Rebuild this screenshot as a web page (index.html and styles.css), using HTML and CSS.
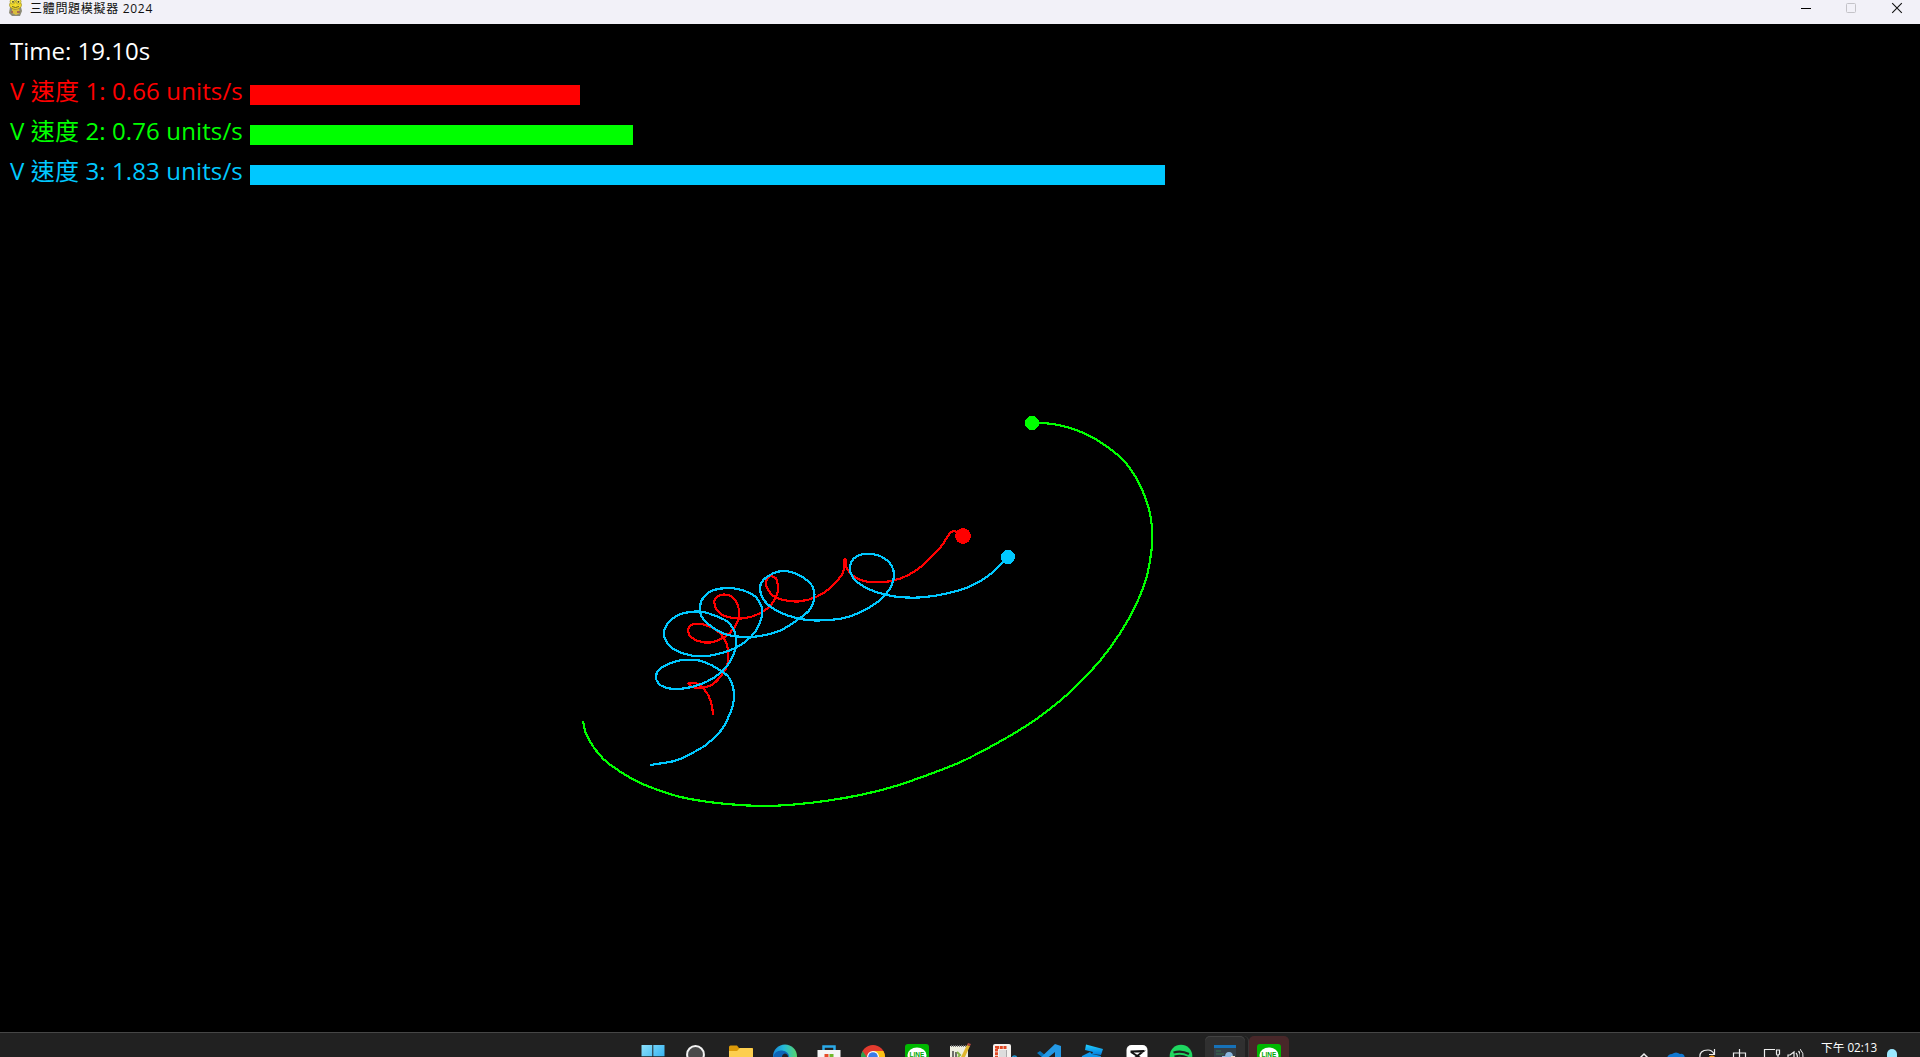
FILE: index.html
```html
<!DOCTYPE html>
<html lang="zh-Hant">
<head>
<meta charset="utf-8">
<title>三體問題模擬器 2024</title>
<link rel="stylesheet" href="styles.css">
</head>
<body>
<header class="titlebar">
  <svg class="app-icon" viewBox="0 0 16 18" width="16" height="18">
    <path d="M2 8h11l1 4-2 5H4l-3-3z" fill="#8c8a78"/>
    <path d="M4 9l3 2 4-2 1 5-4 2-4-2z" fill="#d9bd3c"/>
    <path d="M3 12h2v2H3zM9 12h3v2H9z" fill="#a46c52"/>
    <ellipse cx="7.5" cy="6" rx="6" ry="4.2" fill="#f2dc2c" stroke="#9b8a20" stroke-width=".7"/>
    <circle cx="4.5" cy="2.6" r="2.5" fill="#f7e850" stroke="#9b8a20" stroke-width=".6"/>
    <circle cx="10.6" cy="2.6" r="2.5" fill="#f7e850" stroke="#9b8a20" stroke-width=".6"/>
    <circle cx="5" cy="2.8" r=".9" fill="#333"/><circle cx="10.4" cy="2.8" r=".9" fill="#333"/>
    <path d="M4 7.5q3.500 2 7 0" fill="none" stroke="#71651c"/>
  </svg>
  <span class="title">三體問題模擬器 2024</span>
  <div class="window-buttons">
    <svg width="46" height="24" viewBox="0 0 46 24"><path d="M19 8.500h10" stroke="#000"/></svg>
    <svg width="46" height="24" viewBox="0 0 46 24"><rect x="18.500" y="3.500" width="9" height="9" rx="1" fill="none" stroke="#c4c3c8"/></svg>
    <svg width="46" height="24" viewBox="0 0 46 24"><path d="M18.200 3.200l9.600 9.600m0-9.600l-9.600 9.600" stroke="#111" stroke-width="1.100"/></svg>
  </div>
</header>

<main class="stage">
  <svg class="space" viewBox="0 24 1920 1008" width="1920" height="1008">
    <g class="red"><path class="trail" id="trail1"/><circle cx="963" cy="536" r="7.900"/></g>
    <g class="green"><path class="trail" id="trail2"/><circle cx="1032" cy="423" r="7"/></g>
    <g class="blue"><path class="trail" id="trail3"/><circle cx="1008" cy="557" r="7"/></g>
  </svg>
  <section class="hud">
    <div class="row time"><span class="label">Time: 19.10s</span></div>
    <div class="row red"><span class="label">V 速度 1: 0.66 units/s</span><span class="bar" style="width:330px"></span></div>
    <div class="row green"><span class="label">V 速度 2: 0.76 units/s</span><span class="bar" style="width:383px"></span></div>
    <div class="row blue"><span class="label">V 速度 3: 1.83 units/s</span><span class="bar" style="width:915px"></span></div>
  </section>
</main>

<footer class="taskbar">
  <nav class="apps">
    <span class="app"><svg viewBox="0 0 24 24"><defs><linearGradient id="win" x2="1" y2="1"><stop stop-color="#8be0fb"/><stop offset="1" stop-color="#1ba5ee"/></linearGradient></defs><path d="M.5 0H11.3v11.3H.5zM12.3 0h11.2v11.3H12.3zM.5 12.3h10.8v11H.5zM12.3 12.3h11.2v11H12.3z" fill="url(#win)"/></svg></span>
    <span class="app"><svg viewBox="0 0 24 24"><circle cx="10.5" cy="9.5" r="8.4" fill="#4a4a4a" stroke="#f2f2f2" stroke-width="2"/><path d="M16.5 16l5 6" stroke="#eee" stroke-width="2.5"/></svg></span>
    <span class="app"><svg viewBox="0 0 24 24"><path d="M0 2q0-1.500 1.500-1.500H8L10 3h14v9H0z" fill="#dc9a08"/><path d="M0 6h8l3-3h11.500q1.500 0 1.500 1.500V22H0z" fill="#fdcf4f"/></svg></span>
    <span class="app"><svg viewBox="0 0 24 24"><defs><linearGradient id="edge"><stop stop-color="#1686d9"/><stop offset=".45" stop-color="#24b9d8"/><stop offset="1" stop-color="#58d66b"/></linearGradient></defs><circle cx="12" cy="11.500" r="12" fill="url(#edge)"/><path d="M0 12Q2 5 9 5.500q7 1 7 6.500H9q-1 3 2 8-9 0-11-8z" fill="#0d65b7"/><path d="M9 12q0-3 3-3.500 3 .5 3 3.500z" fill="#202124"/></svg></span>
    <span class="app"><svg viewBox="0 0 24 24"><path d="M6.500 6V1.500h11V6" fill="none" stroke="#2aa9e8" stroke-width="2.500"/><path d="M.5 5h23v15q0 3-3 3h-17q-3 0-3-3z" fill="#f5f5f5"/><path d="M7.500 9h4v4h-4z" fill="#e64b27"/><path d="M12.500 9h4v4h-4z" fill="#70b72b"/></svg></span>
    <span class="app"><svg viewBox="0 0 24 24"><circle cx="12" cy="12" r="12" fill="#e33b2e"/><path d="M1.600 6L7 14l5 10A12 12 0 0 1 1.600 6z" fill="#2ba24c"/><path d="M12 6h10.400A12 12 0 0 1 12 24l5-9z" fill="#fbc116"/><circle cx="12" cy="12" r="6" fill="#fff"/><circle cx="12" cy="12" r="4.800" fill="#397be8"/></svg></span>
    <span class="app"><svg viewBox="0 0 24 24"><rect y="-1" width="24" height="25" rx="3" fill="#00b900"/><ellipse cx="12" cy="10" rx="9.500" ry="7.500" fill="#fff"/><text x="12" y="11.700" class="line-text">LINE</text></svg></span>
    <span class="app"><svg viewBox="0 0 24 24"><path d="M1 1h18v22H1z" fill="#eeeedf"/><path d="M2 1h17" stroke="#777" stroke-width="2" stroke-dasharray="1 1"/><path d="M4 12V6m3 6V7" stroke="#444" stroke-width="1.500"/><path d="M11 14L18 0l3 1-6 13z" fill="#dfb52d"/><path d="M18 0l1-2 3 1-1 2z" fill="#b44a40"/><path d="M8 7l3 3-2 2" stroke="#83b445" stroke-width="2" fill="none"/></svg></span>
    <span class="app"><svg viewBox="0 0 24 24"><rect y="-1" width="18" height="24" rx="2" fill="#f5f2ef"/><path d="M3.500 14V2.500H14" fill="none" stroke="#e14824" stroke-width="3" stroke-dasharray="3 .7"/><path d="M6 5h7v9H6z" fill="#ddd"/><path d="M13.500 5v7" stroke="#aaa"/><circle cx="21.500" cy="13" r="2" fill="none" stroke="#1b9cdb" stroke-width="1.500"/></svg></span>
    <span class="app"><svg viewBox="0 0 24 24"><path d="M0 8l3-2 15 12v5z" fill="#0675bd"/><path d="M0 16L18-1l6 2v21l-6 2V7L3 19z" fill="#2499e6"/></svg></span>
    <span class="app"><svg viewBox="0 0 24 24"><defs><linearGradient id="blox" y2="1" x2="0"><stop stop-color="#20cfff"/><stop offset="1" stop-color="#087dde"/></linearGradient></defs><path d="M5-.5L22 4l-2 6-9-1 1-2-8-2z" fill="url(#blox)"/><path d="M1 11l8-4 2 2 9 2-2 9-18-4z" fill="#1198eb"/></svg></span>
    <span class="app"><svg viewBox="0 0 24 24"><rect x="1.500" y="0" width="21" height="23" rx="5" fill="#fff"/><path d="M5.500 6.500h12.500l-7 5.500 8 6M6 6.500l13-.5M6 7l8 5-8 6" fill="none" stroke="#111" stroke-width="2"/></svg></span>
    <span class="app"><svg viewBox="0 0 24 24"><circle cx="12" cy="11" r="11.300" fill="#1ed760"/><path d="M4.500 7.500q8-2.500 15.500 1.500M5.500 11.500q7-2 13 1.300" fill="none" stroke="#202020" stroke-width="2.200"/></svg></span>
    <span class="app active"><svg viewBox="0 0 24 24"><path d="M1 1h22v20H1z" fill="#343f47"/><path d="M1 0h22v3H1z" fill="#1672b9"/><path d="M3 6h5M3 9h8" stroke="#37724c"/><path d="M12 12q0-5 4-5 4 0 4 5z" fill="#8bb8df"/><path d="M9 11h5v2H9z" fill="#8bb8df"/><path d="M18 11h4v2h-4z" fill="#e9e2cc"/></svg></span>
    <span class="app alert"><svg viewBox="0 0 24 24"><rect y="-1" width="24" height="25" rx="3" fill="#00b900"/><ellipse cx="12" cy="10" rx="9.500" ry="7.500" fill="#fff"/><text x="12" y="11.700" class="line-text">LINE</text></svg></span>
  </nav>
  <div class="tray">
    <svg width="170" height="24" viewBox="0 0 170 24" fill="none" stroke="#eee" stroke-width="1.200">
      <path d="M9 25l5-5 5 5" stroke-width="1.500"/>
      <path d="M37 24q1-4 5-4 4-3 8 0 4-1 5 4z" fill="#0f78d2" stroke="none"/>
      <path d="M70 24q-1-8 8-8 4 0 6 4m.5-5v5.500H79"/><circle cx="82" cy="25" r="3.500" fill="#f59a16" stroke="none"/>
      <path d="M103.500 24v-5h12v5M109.500 15v10"/>
      <path d="M141 24h-6.500v-8.500H145M146.500 16h3v4l-1 1h-1.500l-.500-1zM148 21v3"/>
      <path d="M158 24v-3h2l4-3v6M166 19q2 2 1 5M168.500 17q2.500 3 1.500 7"/>
    </svg>
    <svg class="waves" width="12" height="24" viewBox="0 0 12 24" fill="none" stroke="#eee"><path d="M0 15q4 4 3 9"/></svg>
    <span class="clock">下午 02:13</span>
    <span class="bell"></span>
  </div>
</footer>
<script src="trails.js"></script>
</body>
</html>
```
FILE: styles.css
```css
* { box-sizing: border-box; }
html, body { height: 100%; }
body {
  margin: 0;
  display: flex;
  flex-direction: column;
  overflow: hidden;
  background: #000;
  font-family: "Open Sans", "Noto Sans CJK TC", sans-serif;
}
.titlebar {
  flex: 0 0 24px;
  display: flex;
  background: #f2f1f8;
  color: #111;
  padding-left: 8px;
}
.app-icon { flex: none; margin-top: -1px; }
.title {
  margin-left: 6px;
  font: 12px/17px "Open Sans", "Noto Sans CJK TC", sans-serif;
  letter-spacing: .7px;
  white-space: nowrap;
}
.window-buttons { display: flex; margin-left: auto; }

.stage { flex: 0 0 1008px; display: grid; overflow: hidden; }
.space, .hud { grid-area: 1 / 1; }
.space { display: block; shape-rendering: crispEdges; }
.trail { fill: none; stroke: currentColor; stroke-width: 2.2; }
.space circle { fill: currentColor; }
.red { color: #f00; }
.green { color: #0f0; }
.blue { color: #00c8ff; }
.hud { padding: 6px 0 0 10px; }
.row {
  display: flex;
  height: 40px;
  font-size: 24px;
  line-height: 42px;
  letter-spacing: .12px;
  white-space: nowrap;
}
.row .label { width: 240px; flex: none; }
.time { color: #fff; letter-spacing: 0; }
.bar { height: 20px; margin-top: 15px; background: currentColor; }

.taskbar {
  flex: 0 0 25px;
  display: flex;
  border-top: 1px solid #464646;
  background: #212121;
  overflow: hidden;
  padding-left: 631px;
}
.apps { display: flex; flex: none; }
.app {
  width: 44px;
  height: 44px;
  display: flex;
  justify-content: center;
  padding-top: 12px;
}
.app svg { width: 24px; height: 24px; flex: none; overflow: visible; }
.active, .alert { height: 40px; margin: 3px 2px 0; width: 40px; padding-top: 9px; border-radius: 5px; }
.active { background: #303030; box-shadow: inset 0 1px #424242, 3px 0 #212121, 4px 0 #363636; }
.alert { background: #482729; }
.line-text { font: bold 6.5px "Liberation Sans", sans-serif; text-anchor: middle; fill: #00a600; }
.tray { display: flex; margin-left: auto; width: 290px; }
.tray svg { flex: none; margin-top: 1px; }
.clock {
  width: 58px;
  margin: 4px 0 0 9px;
  color: #fff;
  font-size: 11.7px;
  line-height: 20px;
  white-space: nowrap;
}
.bell { width: 10px; height: 14px; margin: 16px 0 0 8px; border-radius: 5px; background: #9be8ff; }
```
FILE: trails.js
```js
// Recent positions of each body, oldest first, as x,y pairs.
const trails = {
  trail1: "713,715.3 712,706.7 708.7,696 704,689.3 698.3,684.3 693.3,683 689,683 689.3,684.7 693.3,687.3 701.7,687.7 711.7,685 720,677.3 726,668.3 728.3,656.7 727,645 721.7,635 711.7,627.3 698.3,623.7 690,626 688.3,631.7 691.7,637.7 701.7,642 713.3,642 725,636.7 733.3,629 738.3,619.3 739,610 735.7,600.7 730,595.7 722.7,594.7 716,597.7 714.3,602.7 717.3,610.7 726.7,616.7 743.3,618.3 760,613.3 771.7,604 777.7,591.7 776.7,580 773.3,576.7 769.3,576.7 766,581.7 767.3,588.3 773.3,596 785,600.3 800,601.3 816.7,596.7 831.7,586.7 841.7,575 844.5,566.7 844,560 845.7,560 846,567 853.3,576 865,581.3 885,582 901.7,578 916.7,570 930,558.3 941,546.7 949,534.5 953.3,531 958,532.7 963,536",
  trail2: "583,720.7 585.3,731.7 590.7,742.7 598.3,753.3 608.3,763.3 631.7,778.7 650,787 676.7,796 700,800.7 726.7,804 763.3,806 796.7,804.3 830,800.3 863.3,794.3 893.3,786.7 926.7,775.3 960,762.3 986.7,748.8 1016.7,731.8 1043.3,714 1073.3,689 1100,660.7 1120,633.3 1136.7,603.3 1146.7,576.7 1151.5,550 1152.3,533.3 1150.6,516.7 1146.7,501.7 1138.3,481.7 1125,462 1108.3,447.5 1088.3,435.2 1066.7,427 1046.7,423.3 1032,423",
  trail3: "650.3,765 663.3,763 676.7,760.3 691.7,753.3 706.7,744.3 721.7,729.7 728.3,717.3 732.7,706 734,695 732.3,684.3 728.3,676.7 721.7,671.3 711.7,665.3 700,660.7 688.3,659.7 678.3,660.7 668.3,664 660.7,668.3 656,675.3 658,682.7 664.7,687.3 676.7,689 691.7,687 706.7,681.7 720.7,672.7 730,661.7 735,650 736,637.3 732.7,628 726.7,621 713.3,615 701.7,611.7 690,612 680,614.3 670,620.7 664.7,629 664.3,636.7 669.3,645.7 680,652.3 698.3,656.3 718.3,654 736.7,647.3 751.7,636 759.3,624 762.3,611.7 759.3,601.7 753.3,595 741.7,590 728.3,588 713.3,590.3 704,596.7 700,606.7 701.7,616.7 711.7,626.7 726.7,634.7 746.7,637 761.7,635.7 780,630.7 798.3,619.3 810,609.3 814.3,596.7 812.7,586.7 806.7,580 796.7,574 785,571 773.3,573.3 763.3,580 760,588.3 763.3,599.3 773.3,608.7 788.3,615.7 806.7,620 830,620 846.7,617.3 863.3,610.7 876.7,602.7 886,594 891.7,585 894,575 891.7,566 885,558.7 876.7,555 866.7,553.7 856.7,556.3 851,562.7 850.3,571.7 855,580 865,587.3 878.3,592.7 893.3,596.3 913.3,597.7 933.3,596 950,592.7 966.7,587.7 983.3,579.3 996.7,568.7 1007.7,557"
};

// Joins the positions with a Catmull-Rom curve.
function curve(points) {
  let d = `M${points[0]}`;
  for (let i = 0; i < points.length - 1; i++) {
    const a = points[i - 1] || points[i];
    const b = points[i];
    const c = points[i + 1];
    const e = points[i + 2] || c;
    const p = [0, 1].map(k => b[k] + (c[k] - a[k]) / 6);
    const q = [0, 1].map(k => c[k] - (e[k] - b[k]) / 6);
    d += `C${p} ${q} ${c}`;
  }
  return d;
}

for (const [id, text] of Object.entries(trails)) {
  const points = text.split(" ").map(pair => pair.split(",").map(Number));
  document.getElementById(id).setAttribute("d", curve(points));
}
```
